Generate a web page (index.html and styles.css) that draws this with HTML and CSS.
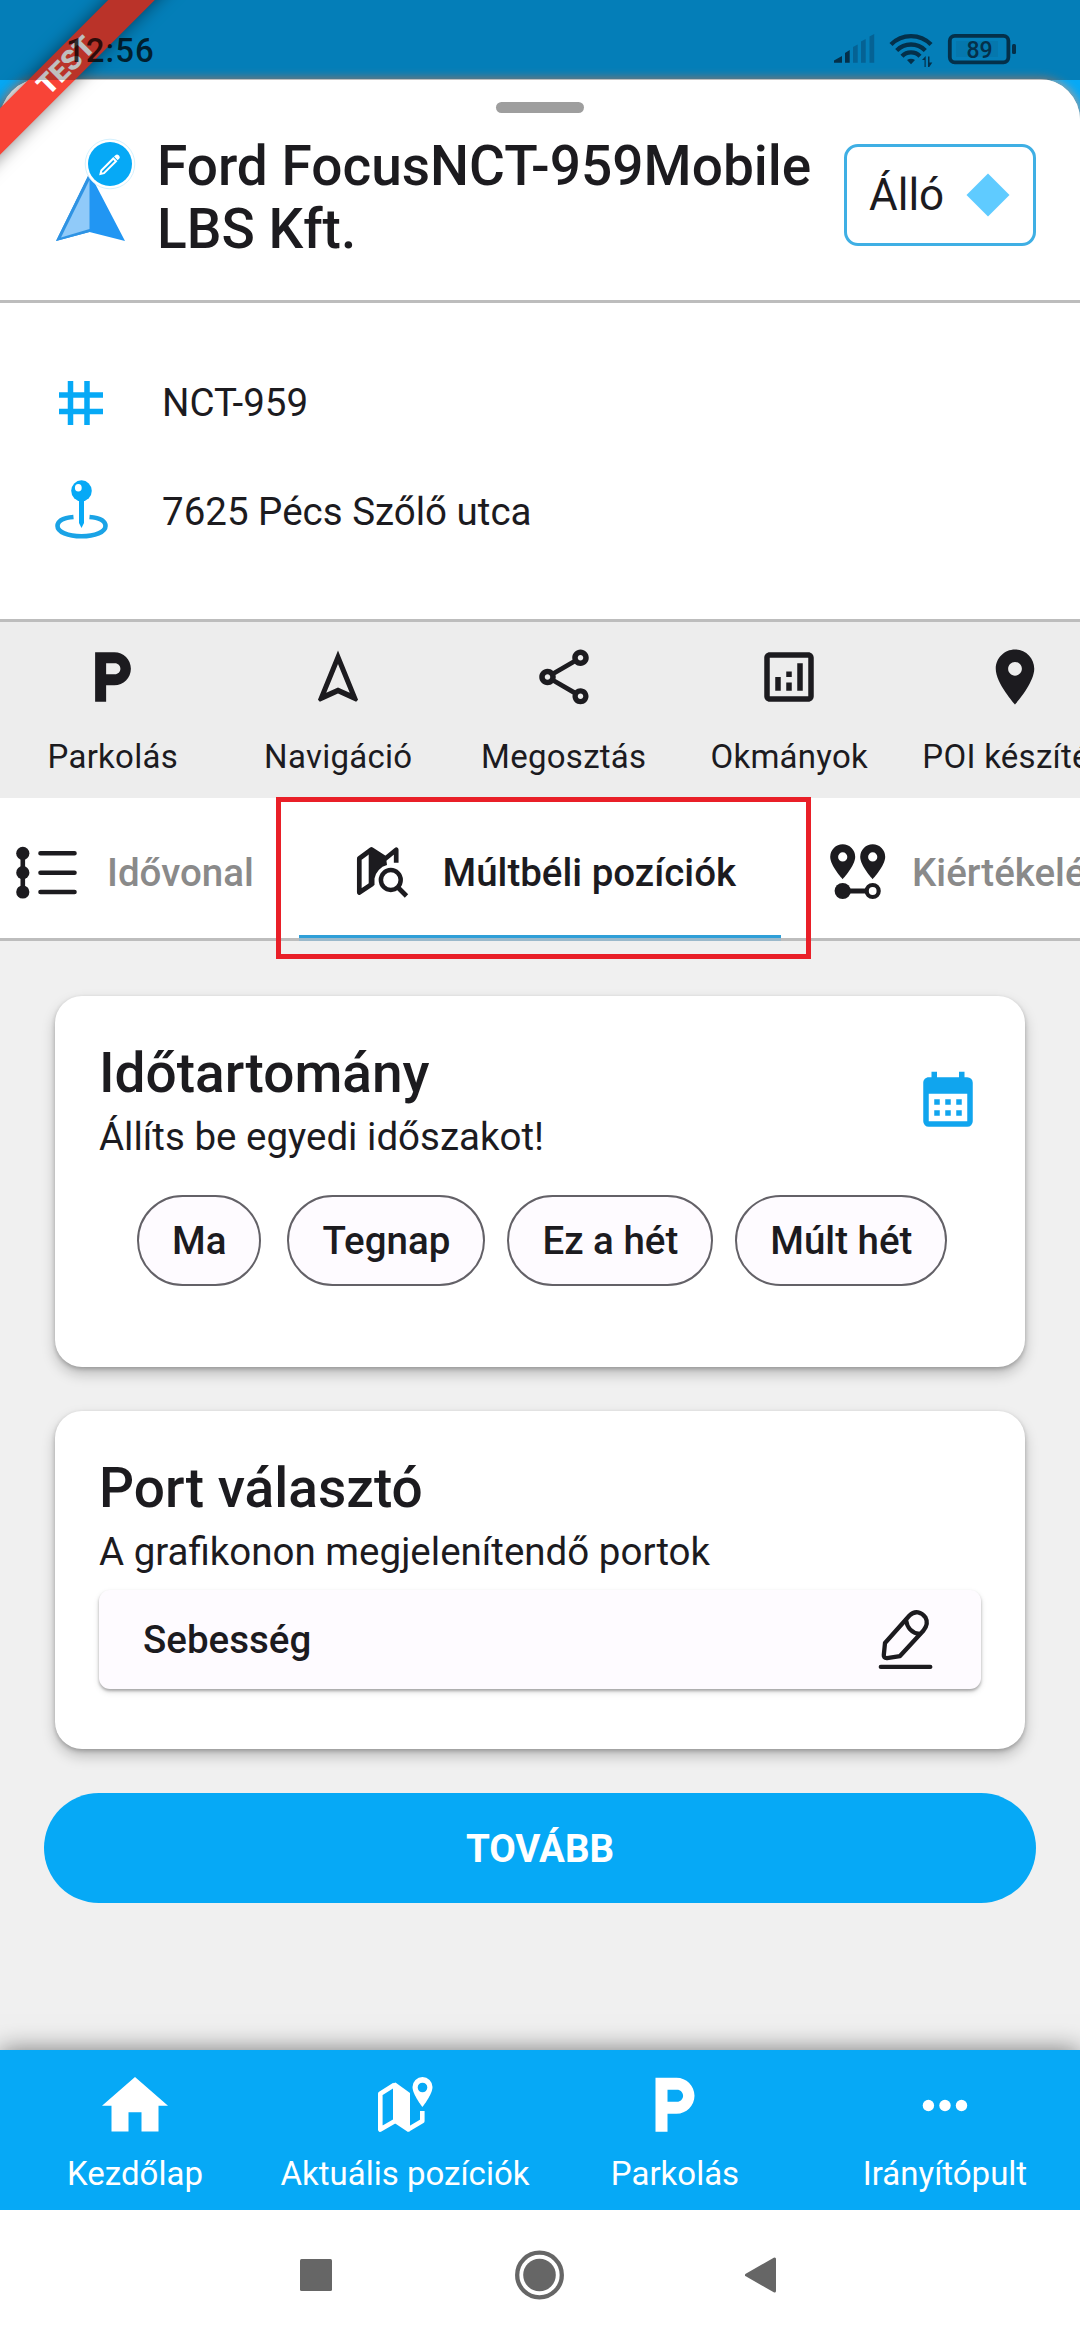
FILE: index.html
```html
<!DOCTYPE html>
<html lang="hu">
<head>
<meta charset="utf-8">
<title>Múltbéli pozíciók</title>
<link rel="stylesheet" href="styles.css">
</head>
<body>
<div class="phone">
  <main class="sheet">
    <header class="head">
      <div class="handle"></div>
      <div class="head-row">
        <svg class="vehicle" viewBox="0 0 84 106">
          <path d="M35.5 35 L71 103 L35.5 94 L2 103 Z" fill="#2196f3"/>
          <path d="M35.5 35 L35.5 94 L2 103 Z" fill="#2f93e3"/>
          <path d="M35.5 42 L35.5 91 L7 99.5 Z" fill="#90caf9"/>
          <circle cx="56" cy="26" r="24.8" fill="#fff" stroke="#c9ecfd" stroke-width=".8"/>
          <circle cx="56" cy="26" r="22" fill="#06a9f6"/>
          <path d="M46.500 36l.8-3.500 12-12 2.700 2.700-12 12z" fill="#06a9f6" stroke="#fff" stroke-width="2"/>
          <path d="M60 18.500l1.700-1.600q1.500-1 3 .4l.6.700q1.100 1.400 0 2.600l-1.600 1.600z" fill="#fff"/>
        </svg>
        <h1 class="title">Ford FocusNCT-959Mobile LBS Kft.</h1>
        <div class="state">
          <span>Álló</span>
          <svg class="diamond" viewBox="0 0 44 44"><path d="M22 0.500L43.500 22 22 43.500 0.500 22z"/></svg>
        </div>
      </div>
    </header>

    <section class="info">
      <div class="info-row">
        <svg class="info-icon" viewBox="0 -1 66 66"><path d="M17.500 11v44M34 11v44M6 25h44M6 41.500h44" fill="none" stroke="#06a9f6" stroke-width="5.500"/></svg>
        <span>NCT-959</span>
      </div>
      <div class="info-row">
        <svg class="info-icon" viewBox="2 -.5 66 66">
          <ellipse cx="30.500" cy="12.300" rx="10.300" ry="10.500" fill="#06a9f6"/>
          <ellipse cx="27.300" cy="9.300" rx="3.400" ry="3.800" fill="#fff"/>
          <path d="M28 21h5v23.500l-2.500 5-2.500-5z" fill="#06a9f6"/>
          <path d="M22.500 38.500C11 39.500 6.500 43 6.500 47.500c0 6 10.500 10.300 24 10.300s24-4.300 24-10.300c0-4.500-4.500-8-16-9" fill="none" stroke="#1aa3e6" stroke-width="4.600"/>
        </svg>
        <span>7625 Pécs Szőlő utca</span>
      </div>
    </section>

    <nav class="actions">
      <a class="action"><svg viewBox=".5 0 24 24"><path d="M13 3H6v18h4v-6h3c3.310 0 6-2.690 6-6s-2.690-6-6-6zm.2 8H10V7h3.200c1.100 0 2 .9 2 2s-.9 2-2 2z"/></svg><span>Parkolás</span></a>
      <a class="action"><svg viewBox="0 0 24 24"><path d="M12 7.270l4.280 10.430-3.470-1.530-.81-.36-.81.360-3.470 1.530L12 7.270M12 2.400L4.700 20.290l.71.710L12 18l6.590 3 .71-.71L12 2.400z"/></svg><span>Navigáció</span></a>
      <a class="action"><svg viewBox="0 0 24 24"><path d="M18 16.080c-.76 0-1.440.3-1.960.77L8.910 12.700c.05-.23.09-.46.09-.7s-.04-.47-.09-.7l7.050-4.110c.54.500 1.250.81 2.040.81 1.660 0 3-1.340 3-3s-1.340-3-3-3-3 1.340-3 3c0 .24.040.47.090.7L8.040 9.810C7.500 9.310 6.790 9 6 9c-1.660 0-3 1.340-3 3s1.340 3 3 3c.79 0 1.500-.31 2.040-.81l7.120 4.160c-.05.21-.08.43-.08.65 0 1.610 1.310 2.920 2.920 2.920s2.920-1.310 2.920-2.920-1.310-2.920-2.920-2.920zM18 4c.55 0 1 .45 1 1s-.45 1-1 1-1-.45-1-1 .45-1 1-1zM6 13c-.55 0-1-.45-1-1s.45-1 1-1 1 .45 1 1-.45 1-1 1zm12 7.020c-.55 0-1-.45-1-1s.45-1 1-1 1 .45 1 1-.45 1-1 1z"/></svg><span>Megosztás</span></a>
      <a class="action"><svg viewBox="0 0 24 24"><path d="M19 3H5c-1.100 0-2 .9-2 2v14c0 1.100.9 2 2 2h14c1.100 0 2-.9 2-2V5c0-1.100-.9-2-2-2zm0 16H5V5h14v14zM7 12h2v5H7zM15 7h2v10h-2zM11 14h2v3h-2zM11 10h2v2h-2z"/></svg><span>Okmányok</span></a>
      <a class="action"><svg viewBox="0 0 24 24"><path d="M12 2C8.130 2 5 5.130 5 9c0 5.250 7 13 7 13s7-7.750 7-13c0-3.870-3.130-7-7-7zm0 9.500c-1.380 0-2.500-1.120-2.500-2.500s1.120-2.500 2.500-2.500 2.500 1.120 2.500 2.500-1.120 2.500-2.500 2.500z"/></svg><span>POI készítés</span></a>
    </nav>

    <nav class="tabs">
      <a class="tab tab-timeline">
        <svg viewBox="0 0 66 66"><path d="M10.800 13.300v38.500M28.500 13.300h34M28.500 32.700h34M28.500 52h34" fill="none" stroke="#1c1b1f" stroke-width="4.600" stroke-linecap="round"/><circle cx="10.800" cy="13.300" r="6.600"/><circle cx="10.800" cy="32.700" r="6.600"/><circle cx="10.800" cy="52" r="6.600"/></svg>
        <span>Idővonal</span>
      </a>
      <a class="tab tab-past">
        <svg viewBox="0 0 66 66">
          <path d="M22.500 43.800L9.300 52.500V18.500L21.500 9.500L35.500 18.500L46.200 9.800V22.700" fill="none" stroke="#1c1b1f" stroke-width="4.700" stroke-linejoin="round"/>
          <path d="M18.700 9L22 8l14 9.500 1 7.500a17 17 0 0 0-12.500 13.500V45l-5.800 2.500z"/>
          <circle cx="40.800" cy="40" r="9.900" fill="none" stroke="#1c1b1f" stroke-width="4.500"/>
          <path d="M48 47.500l8.500 8.500" stroke="#1c1b1f" stroke-width="4.800"/>
        </svg>
        <span>Múltbéli pozíciók</span>
        <i class="indicator"></i>
        <i class="highlight"></i>
      </a>
      <a class="tab tab-eval">
        <svg viewBox="0 0 66 66">
          <path id="pin" d="M17.700 4.300a12.500 12.500 0 0 0-12.500 12.500c0 9 12.500 22.400 12.500 22.400s12.500-13.400 12.500-22.400a12.500 12.500 0 0 0-12.500-12.500zm0 8a4.600 4.600 0 1 1 0 9.200a4.600 4.600 0 0 1 0-9.200z"/>
          <use href="#pin" x="30"/>
          <circle cx="17.700" cy="51" r="8.100"/>
          <circle cx="47.700" cy="51" r="6" fill="none" stroke="#1c1b1f" stroke-width="4.200"/>
          <path d="M20 51h21" stroke="#1c1b1f" stroke-width="5"/>
        </svg>
        <span>Kiértékelés</span>
      </a>
    </nav>

    <div class="content">
      <section class="card range">
        <div class="card-head">
          <div>
            <h2>Időtartomány</h2>
            <p>Állíts be egyedi időszakot!</p>
          </div>
          <svg class="calendar" viewBox="0 0 24 24"><path d="M7 11h2v2H7zM7 15h2v2H7zM11 15h2v2h-2zM11 11h2v2h-2zM15 11h2v2h-2zM15 15h2v2h-2zM5 3h1V1h2v2h8V1h2v2h1a2 2 0 0 1 2 2v14a2 2 0 0 1-2 2H5a2 2 0 0 1-2-2V5c0-1.100.9-2 2-2zm0 16h14V9H5z" fill-rule="evenodd"/></svg>
        </div>
        <div class="chips">
          <button class="chip chip-today">Ma</button>
          <button class="chip">Tegnap</button>
          <button class="chip">Ez a hét</button>
          <button class="chip">Múlt hét</button>
        </div>
      </section>
      <section class="card ports">
        <h2>Port választó</h2>
        <p>A grafikonon megjelenítendő portok</p>
        <div class="field">
          <span>Sebesség</span>
          <svg viewBox="0 6.500 66 66" fill="none" stroke="#1c1b1f" stroke-width="4.300" stroke-linejoin="round" stroke-linecap="round"><path d="M14 42.500L38.500 15C44 9.500 50.500 11.500 54.500 17C57 21.500 56 25.500 52.500 30L29 55.500L16 57.500C13.500 57.700 12.700 56.500 12.800 54.500Z"/><path d="M35 19.500C36 27 41 32.500 48.500 33.500M9.800 66.400h49.500" /></svg>
        </div>
      </section>
      <button class="next">TOVÁBB</button>
    </div>
  </main>

  <nav class="bottom">
    <a class="dest"><svg viewBox="0 0 78 78"><path d="M32.500 64.500V45.300h13v19.200H62.500V38.800H72L39 10 6 38.800h9.500v25.700z"/></svg><span>Kezdőlap</span></a>
    <a class="dest"><svg viewBox="-6 -4 78 78">
      <path d="M23 50L8.300 58.500V22.700L22.500 13.800M36 58.500L50.300 50V40" fill="none" stroke="#fff" stroke-width="4.600" stroke-linejoin="round"/>
      <path d="M21 12.500l2.500-.9L38 22v38l-2 1-15-10z"/>
      <path d="M50.500 6a10 10 0 0 0-10 10c0 7.500 10 20 10 20s10-12.500 10-20a10 10 0 0 0-10-10zm0 5.700a4.800 4.800 0 1 1 0 9.600a4.800 4.800 0 0 1 0-9.600z"/></svg><span>Aktuális pozíciók</span></a>
    <a class="dest"><svg viewBox="-.5 0 26 26"><path d="M13 3.600H6v18h4v-6h3c3.310 0 6-2.690 6-6s-2.690-6-6-6zm.2 8H10V7.600h3.200c1.100 0 2 .9 2 2s-.9 2-2 2z"/></svg><span>Parkolás</span></a>
    <a class="dest"><svg viewBox="0 -.5 78 78"><circle cx="22.400" cy="38" r="5.700"/><circle cx="39" cy="38" r="5.700"/><circle cx="55.500" cy="38" r="5.700"/></svg><span>Irányítópult</span></a>
  </nav>

  <footer class="system">
    <svg viewBox="0 0 60 60"><rect x="13" y="14" width="32" height="32" rx="1.500"/></svg>
    <svg viewBox="0 0 60 60"><circle cx="29.500" cy="30" r="16.300"/><circle cx="29.500" cy="30" r="22.300" fill="none" stroke="#666" stroke-width="4.300"/></svg>
    <svg viewBox="0 0 60 60"><path d="M13.500 30L41.500 14V46z" stroke="#666" stroke-width="3" stroke-linejoin="round"/></svg>
  </footer>

  <div class="ribbon">TEST</div>

  <div class="status">
    <span class="clock">12:56</span>
    <svg class="status-icons" viewBox="830 28 192 44">
      <g fill="#04304a"><path d="M834 62.700V60.500L842 56v6.700zM845 62.700V53l4.700-3v12.700z"/></g>
      <g fill="#056294"><path d="M853 62.700V47l4.700-2.500v18.200zM861 62.700V41.500l4.700-2.500v23.700zM869.500 62.700V36.500l4.700-2.500v28.700z"/></g>
      <g fill="none" stroke="#04304a" stroke-width="4.300">
        <path d="M891 44.500a28 28 0 0 1 40 0M896.700 50.500a20 20 0 0 1 28.600 0M902 56.200a12.500 12.500 0 0 1 18 0"/>
      </g>
      <path d="M907 60q4-2.500 8 0l-4 4.200zM924.500 67v-7h-2.500l3.700-4V67zM928 56.500v10.500h1.300l3-4.500h-2.800v-6z" fill="#04304a"/>
      <rect x="956" y="41" width="42" height="16" fill="#0577ad"/>
      <rect x="949.800" y="35.800" width="58.600" height="26.500" rx="5" fill="none" stroke="#04304a" stroke-width="3.800"/>
      <rect x="1012" y="44" width="4" height="10" rx="1.500" fill="#04304a"/>
      <text class="level" x="979.500" y="57.500" text-anchor="middle">89</text>
    </svg>
  </div>
</div>
</body>
</html>
```
FILE: styles.css
```css
* { box-sizing: border-box; }
body { margin: 0; font-family: Roboto, sans-serif; color: #1c1b1f; background: #fff; }
h1, h2, p { margin: 0; font-weight: 400; }
button { font: inherit; color: inherit; }

.phone { position: relative; display: flex; flex-direction: column; width: 1080px; height: 2340px; padding-top: 79px; overflow: hidden; background: #06a9f6; }

.sheet { display: flex; flex: 1; flex-direction: column; min-height: 0; background: #f0f0f0; border-radius: 41px 41px 0 0; box-shadow: 0 0 9px 2px #9e9e9e; }
.head { height: 224px; padding-top: 23px; background: #fff; border-bottom: 3px solid #bdbdbd; border-radius: 41px 41px 0 0; }
.handle { width: 88px; height: 11px; margin: 0 auto; border-radius: 6px; background: #9e9e9e; }
.head-row { display: flex; align-items: flex-start; padding: 22px 44px 0 54px; }
.vehicle { width: 84px; height: 106px; margin-top: 3px; }
.title { flex: 1; padding-left: 19px; font-size: 55px; font-weight: 500; line-height: 63px; }
.state { display: flex; align-items: center; width: 192px; height: 102px; margin-top: 9px; padding: 0 23px 0 22px; justify-content: space-between; border: 3px solid #3fafe4; border-radius: 14px; font-size: 44px; }
.diamond { width: 44px; height: 44px; fill: #5fcbff; }

.info { display: flex; flex-direction: column; gap: 43px; height: 319px; padding: 66px 53px 0; background: #fff; border-bottom: 3px solid #bdbdbd; }
.info-row { display: flex; align-items: center; gap: 43px; height: 66px; font-size: 38.500px; }
.info-icon { width: 66px; height: 66px; }

.actions { display: flex; height: 176px; padding-top: 22px; overflow: hidden; background: #ededed; }
.action { display: flex; flex: none; flex-direction: column; align-items: center; width: 225.500px; font-size: 33px; line-height: 48px; letter-spacing: .275px; white-space: nowrap; }
.action svg { width: 66px; height: 66px; margin-bottom: 23px; fill: #1c1b1f; }

.tabs { display: flex; height: 143px; background: #fff; border-bottom: 3px solid #bdbdbd; font-size: 38.500px; font-weight: 500; white-space: nowrap; }
.tab { position: relative; display: flex; flex: none; align-items: center; height: 149px; color: #8a8a8a; }
.tab svg { flex: none; width: 66px; height: 66px; fill: #1c1b1f; }
.tab-timeline { width: 276px; padding-left: 12px; gap: 29px; }
.tab-past { width: 535px; padding-left: 74px; gap: 26.500px; color: #1c1b1f; }
.tab-eval { padding-left: 14px; gap: 21px; }
.indicator { position: absolute; left: 23px; top: 137px; width: 482px; height: 6px; background: linear-gradient(#2f9fd8 0 3.500px, #9bb9cb 3.500px); }
.highlight { position: absolute; left: 0; top: -1px; width: 535px; height: 162px; border: 5px solid #e91f28; z-index: 2; }

.content { display: flex; flex: 1; flex-direction: column; padding: 55px 55px 0; }
.card { border-radius: 27px; background: #fff; box-shadow: 0 2px 4px rgba(0, 0, 0, .22), 0 7px 14px rgba(0, 0, 0, .22); }
.card h2 { font-size: 55px; font-weight: 500; line-height: 64px; }
.card p { margin-top: 6px; font-size: 38.500px; line-height: 52px; }
.range { height: 371px; padding: 45px 44px 0; margin-bottom: 44px; }
.card-head { display: flex; justify-content: space-between; }
.calendar { width: 66px; height: 66px; margin-top: 28px; fill: #10a5ee; }
.chips { display: flex; gap: 22px; padding: 32px 0 0 38px; }
.chip { flex: none; height: 91px; padding: 0 33px; border: 2px solid #636167; border-radius: 46px; background: #fefbff; font-size: 38.500px; font-weight: 500; white-space: nowrap; }
.chip-today { margin-right: 4px; }
.ports { height: 338px; padding: 45px 44px 0; margin-bottom: 44px; }
.field { display: flex; align-items: center; justify-content: space-between; height: 99px; margin-top: 12px; padding: 0 44px; border-radius: 11px; background: #fefbff; box-shadow: 0 2px 3px rgba(0, 0, 0, .28), 0 3px 6px rgba(0, 0, 0, .12); font-size: 38.500px; font-weight: 500; }
.field svg { width: 66px; height: 66px; overflow: visible; }
.next { height: 110px; margin: 0 -11px; padding: 0; border: 0; border-radius: 55px; background: #06a9f6; color: #fff; font-size: 38.500px; font-weight: 700; }

.bottom { display: flex; height: 160px; padding-top: 17px; background: #06a9f6; color: #fff; box-shadow: 0 0 24px rgba(0, 0, 0, .5); }
.dest { display: flex; flex: 1; flex-direction: column; align-items: center; font-size: 33px; line-height: 44px; }
.dest svg { width: 78px; height: 78px; margin-bottom: 7px; fill: #fff; }

.system { display: flex; justify-content: center; gap: 163px; height: 130px; padding-top: 35px; background: #fff; z-index: 1; }
.system svg { width: 60px; height: 60px; fill: #666; }

.ribbon { position: absolute; left: -134px; top: 49px; width: 400px; height: 33px; transform: rotate(-45deg); background: #f84437; box-shadow: 0 0 17px rgba(0, 0, 0, .5); color: #fff; font-size: 28px; font-weight: 900; line-height: 33px; text-align: center; }
.status { position: absolute; left: 0; top: 0; display: flex; justify-content: space-between; width: 1080px; height: 80px; padding: 28px 58px 0 66px; background: rgba(0, 0, 0, .25); }
.clock { color: rgba(0, 0, 0, .75); font-size: 33px; font-weight: 500; line-height: 45px; letter-spacing: 1px; }
.status-icons { width: 192px; height: 44px; }
.level { fill: #04304a; font-size: 23px; font-weight: 500; }
```
